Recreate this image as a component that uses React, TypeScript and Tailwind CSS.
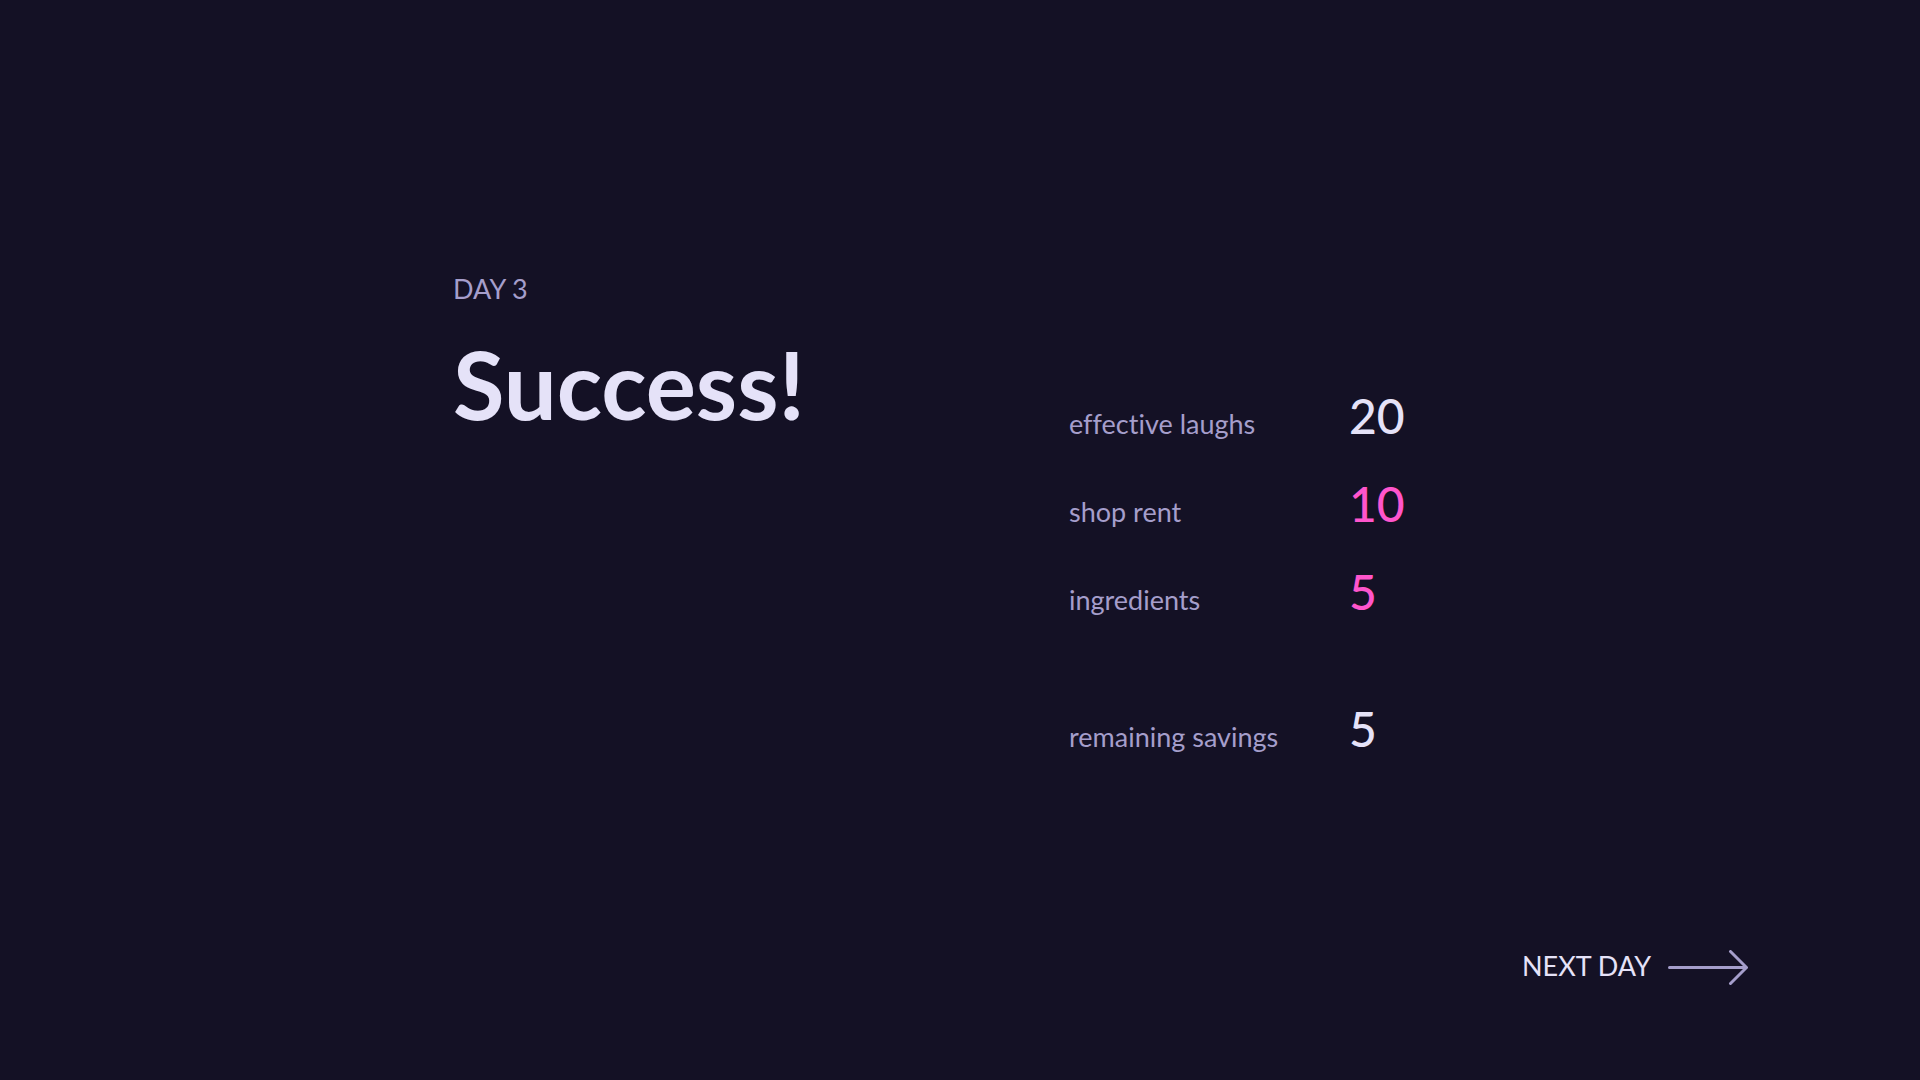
type Entry = { label: string; value: number; tone: string; spacing: string };

const entries: Entry[] = [
  { label: "effective laughs", value: 20, tone: "text-[#e5e2f8]", spacing: "" },
  { label: "shop rent", value: 10, tone: "text-[#ff55cc]", spacing: "" },
  { label: "ingredients", value: 5, tone: "text-[#ff55cc]", spacing: "" },
  { label: "remaining savings", value: 5, tone: "text-[#e5e2f8]", spacing: "mt-[49px]" },
];

export default function App() {
  return (
    <div className="flex min-h-screen flex-col bg-[#141125] font-['Lato',sans-serif] text-[#a59ecb] [font-variant-ligatures:none]">
      <main className="mx-auto grid w-full max-w-[1014px] grow grid-cols-[616px_1fr] items-start pt-[268px]">
        <header>
          <p className="text-[27px] leading-[42px]">DAY 3</p>
          <h1 className="mt-3 text-[94px] leading-[124px] font-bold text-[#e5e2f8]">Success!</h1>
        </header>
        <dl className="pt-[104px]">
          {entries.map((e) => (
            <div key={e.label} className={`flex h-[88px] items-baseline ${e.spacing}`}>
              <dt className="w-[280px] text-[27px] leading-[88px]">{e.label}</dt>
              <dd className={`text-[48px] leading-[88px] font-medium ${e.tone}`}>{e.value}</dd>
            </div>
          ))}
        </dl>
      </main>
      <footer className="flex justify-end pr-[170px] pb-[90px]">
        <button type="button" className="flex cursor-pointer items-center gap-4 text-[27px] leading-10 text-[#e5e2f8]">
          <span className="pb-1">NEXT DAY</span>
          <svg className="h-9 w-[83px] text-[#a59ecb]" viewBox="0 0 83 36" fill="none" stroke="currentColor" strokeWidth="3" strokeLinecap="round" strokeLinejoin="round" aria-hidden="true">
            <path d="M2.500 17.500H79.500M63.500 1.500L79.500 17.500L63.500 33.500" />
          </svg>
        </button>
      </footer>
    </div>
  );
}
